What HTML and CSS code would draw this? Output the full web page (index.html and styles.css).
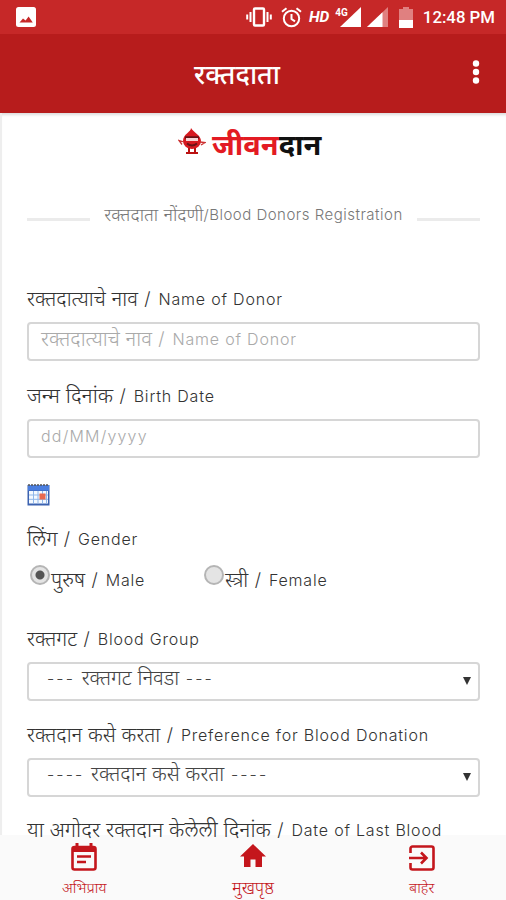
FILE: index.html
```html
<!DOCTYPE html>
<html lang="mr">
<head>
  <meta charset="UTF-8">
  <title>रक्तदाता</title>
  <meta name="viewport" content="width=device-width, initial-scale=1.0">
  <link rel="stylesheet" href="styles.css">
</head>
<body>
  <div class="statusbar">
    <svg class="picture" width="20" height="20" viewBox="0 0 20 20">
      <rect width="20" height="20" rx="2.5" fill="#fff"/>
      <path d="M3.5 15.500l3.500-4 2.600 2 3-4 4.200 6z" fill="#c62828"/>
    </svg>
    <div class="status-right">
      <svg width="26" height="20" viewBox="0 0 26 20" fill="none" stroke="#fff">
        <rect x="8" y="1.5" width="10" height="17" rx="1" stroke-width="2.4"/>
        <path d="M4.5 5v10M21.5 5v10" stroke-width="2"/>
        <path d="M1.2 7.5v5M24.8 7.5v5" stroke-width="2"/>
      </svg>
      <svg class="alarm" width="21" height="21" viewBox="0 0 21 21" fill="none" stroke="#fff" stroke-width="2">
        <circle cx="10.5" cy="11.5" r="7.7"/>
        <path d="M10.5 7v5l3.5 2.4M1 4.8l4.5-3.6M20 4.8l-4.5-3.6"/>
      </svg>
      <span class="hd">HD</span>
      <div class="signal">
        <span class="net">4G</span>
        <svg width="21" height="20" viewBox="0 0 21 20"><path d="M21 0v20H0z" fill="#fff"/></svg>
      </div>
      <svg class="signal2" width="21" height="20" viewBox="0 0 21 20">
        <path d="M21 0v20H0z" fill="#e08080"/>
        <path d="M15.5 5.2V20H0z" fill="#fff"/>
      </svg>
      <svg class="battery" width="14" height="21" viewBox="0 0 14 21">
        <path d="M4 0h6v2h4v11H0V2h4z" fill="#e08080"/>
        <path d="M0 13h14v8H0z" fill="#fff"/>
      </svg>
      <span class="time">12:48 PM</span>
    </div>
  </div>

  <header class="appbar">
    <h1>रक्तदाता</h1>
    <svg class="more" width="8" height="24" viewBox="0 0 8 24" fill="#fff">
      <circle cx="4" cy="3.5" r="3.2"/><circle cx="4" cy="12" r="3.2"/><circle cx="4" cy="20.5" r="3.2"/>
    </svg>
  </header>

  <main class="page">
    <div class="logo">
      <svg width="28" height="28" viewBox="0 0 28 28">
        <path d="M13 0c0 4-8 6-8 13a9 8 0 0 0 18 0C23 7 16 5 13 0z" fill="#d71920"/>
        <path d="M6 14l-5-1.500 3 4M22 14l5 .5-4 2.500" stroke="#c33" stroke-width="1.300" fill="none"/>
        <path d="M7 9.500h14" stroke="#6b1216" stroke-width="2.500"/>
        <path d="M8 11.500h12" stroke="#f6d5d5" stroke-width="3"/>
        <path d="M9 15.500q5 4 10 0" stroke="#6b1216" stroke-width="1.800" fill="none"/>
        <path d="M11 20v4M17 20v4M8 25h12" stroke="#b11" stroke-width="2"/>
      </svg>
      <span class="brand"><span class="red">जीवन</span>दान</span>
    </div>

    <div class="divider"><span><span class="hi">रक्तदाता नोंदणी</span><span class="en">/Blood Donors Registration</span></span></div>

    <form>
      <div class="field">
        <label><span class="hi">रक्तदात्याचे नाव</span><span class="slash"> / </span><span class="en">Name of Donor</span></label>
        <div class="box placeholder"><span class="hi">रक्तदात्याचे नाव</span><span class="slash"> / </span><span class="en">Name of Donor</span></div>
      </div>

      <div class="field">
        <label><span class="hi wide">जन्म दिनांक</span><span class="slash"> / </span><span class="en">Birth Date</span></label>
        <div class="box placeholder"><span class="en date">dd/MM/yyyy</span></div>
      </div>

      <svg class="calendar" width="23" height="22" viewBox="0 0 23 22">
        <rect x=".5" y="1" width="22" height="20.500" fill="#3c62b0"/>
        <rect x="1" y="1" width="21" height="5.500" fill="#4a7ee0"/>
        <path d="M1 1h21" stroke="#555" stroke-width="1.600" stroke-dasharray="2 1"/>
        <rect x="2" y="7" width="19" height="12.500" fill="#f4f9ff"/>
        <path d="M2 11h19M2 15.300h19M6.500 7v12.500M11 7v12.500M15.500 7v12.500M19.500 7v12.500" stroke="#8fb7ea"/>
        <rect x="12.500" y="9.500" width="6" height="6" fill="#e8694f"/>
      </svg>

      <div class="gender">
        <label><span class="hi wide">लिंग</span><span class="slash"> / </span><span class="en">Gender</span></label>
        <div class="options">
          <div class="option"><i class="radio checked"></i><span><span class="hi">पुरुष</span><span class="slash"> / </span><span class="en">Male</span></span></div>
          <div class="option"><i class="radio"></i><span><span class="hi">स्त्री</span><span class="slash"> / </span><span class="en">Female</span></span></div>
        </div>
      </div>

      <div class="field">
        <label><span class="hi">रक्तगट</span><span class="slash"> / </span><span class="en">Blood Group</span></label>
        <div class="box select"><span><span class="dash">--- </span><span class="hi">रक्तगट निवडा</span><span class="dash"> ---</span></span><i class="caret"></i></div>
      </div>

      <div class="field short">
        <label><span class="hi">रक्तदान कसे करता</span><span class="slash"> / </span><span class="en">Preference for Blood Donation</span></label>
        <div class="box select"><span><span class="dash">---- </span><span class="hi">रक्तदान कसे करता</span><span class="dash"> ----</span></span><i class="caret"></i></div>
      </div>

      <div class="field short">
        <label><span class="hi wide">या अगोदर रक्तदान केलेली दिनांक</span><span class="slash"> / </span><span class="en">Date of Last Blood</span></label>
      </div>
    </form>
  </main>

  <nav class="tabs">
    <a class="tab">
      <svg width="26" height="28" viewBox="0 0 26 28" fill="none" stroke="#c4161c">
        <rect x="1.500" y="4" width="23" height="22.500" rx="2" stroke-width="2.600"/>
        <path d="M1 6.500h24" stroke-width="5"/>
        <path d="M6 0v5M20 0v5" stroke-width="3"/>
        <path d="M6 13.500h14M6 19h9" stroke-width="2.500"/>
      </svg>
      <span>अभिप्राय</span>
    </a>
    <a class="tab active">
      <svg width="26" height="28" viewBox="0 0 26 28" fill="#c4161c">
        <path d="M13 1L0 13.500h4V24h6.500v-7.500h5V24H22V13.500h4z"/>
      </svg>
      <span>मुखपृष्ठ</span>
    </a>
    <a class="tab">
      <svg width="26" height="28" viewBox="0 0 26 28" fill="none" stroke="#c4161c" stroke-width="2.600">
        <path d="M1.500 10V5.500a2 2 0 0 1 2-2h19a2 2 0 0 1 2 2v19a2 2 0 0 1-2 2h-19a2 2 0 0 1-2-2V20"/>
        <path d="M0 15h17M12 9.500l5.500 5.500-5.500 5.500"/>
      </svg>
      <span>बाहेर</span>
    </a>
  </nav>
</body>
</html>
```
FILE: styles.css
```css
* {
  box-sizing: border-box;
}

body {
  margin: 0;
  width: 506px;
  height: 900px;
  overflow: hidden;
  display: flex;
  flex-direction: column;
  font-family: Inter, "Noto Sans", sans-serif;
  font-weight: 300;
  font-size: 16px;
  color: #333;
  background: #fff;
}

svg {
  display: block;
  flex: none;
}

.hi {
  font-size: 20.4px;
  line-height: 0;
  vertical-align: -1px;
}

.hi.wide {
  font-size: 21.1px;
}

.slash {
  font-size: 18px;
  line-height: 0;
  letter-spacing: 1.4px;
}

.en {
  letter-spacing: 0.8px;
}

.date {
  letter-spacing: 1.2px;
}

.dash {
  letter-spacing: 2.1px;
}

.statusbar {
  height: 34px;
  flex: none;
  display: flex;
  justify-content: space-between;
  padding: 0 11px 0 16px;
  align-items: center;
  background: #c62828;
  color: #fff;
}

.status-right {
  display: flex;
  align-items: center;
}

.alarm {
  margin-left: 9px;
}

.hd {
  margin-left: 7px;
  font: italic 700 15.5px Roboto, sans-serif;
}

.signal {
  display: flex;
  align-items: flex-start;
  margin-left: 6px;
}

.net {
  font: 700 10px Roboto, sans-serif;
  margin-right: -8px;
}

.signal2 {
  margin-left: 6px;
}

.battery {
  margin-left: 11px;
}

.time {
  margin-left: 10px;
  font: 500 16.8px Roboto, sans-serif;
}

.appbar {
  height: 79px;
  flex: none;
  display: flex;
  align-items: center;
  background: #b71c1c;
  padding: 0 26px 0 194px;
  justify-content: space-between;
  color: #fff;
}

.appbar h1 {
  margin: 0;
  font-size: 26.7px;
  font-weight: 500;
  white-space: nowrap;
}

.more {
  margin-bottom: 4px;
}

/* last label hangs a little over the tab bar */
.page {
  position: relative;
  z-index: 1;
  height: 722px;
  flex: none;
  padding: 0 26px 0 25px;
  border-left: 2px solid #eee;
  box-shadow: inset 0 4px 3px -2px #ddd;
}

.logo {
  display: flex;
  align-items: center;
  height: 60px;
  padding-left: 151px;
}

.logo svg {
  margin-top: -2px;
}

.brand {
  margin-left: 6px;
  font-size: 29px;
  font-weight: 700;
  color: #111;
  white-space: nowrap;
}

.brand .red {
  color: #e31b23;
}

.divider {
  display: flex;
  align-items: center;
  gap: 14px;
  height: 40px;
  margin-top: 21px;
  color: #777;
  font-size: 15px;
  white-space: nowrap;
}

.divider .hi {
  font-size: 18.2px;
}

.divider .en {
  letter-spacing: 0.5px;
}

.divider::before,
.divider::after {
  content: "";
  flex: 1;
  height: 3px;
  margin-top: 11px;
  background: #ebebeb;
}

form {
  padding-top: 52px;
}

.field {
  height: 97px;
}

.field.short {
  height: 96px;
  margin-top: -1px;
}

label {
  display: block;
  height: 36px;
  line-height: 26px;
  white-space: pre;
}

.box {
  height: 39px;
  border: 2px solid #d6d6d6;
  border-radius: 4px;
  padding: 0 12px;
  line-height: 30px;
  white-space: pre;
}

.placeholder {
  color: #aaa;
}

.select {
  display: flex;
  justify-content: space-between;
  padding: 0 7px 0 18px;
  line-height: 29px;
  color: #444;
}

.caret {
  margin-top: 13px;
  width: 0;
  height: 0;
  border: 4px solid transparent;
  border-top: 8px solid #333;
  border-bottom: 0;
}

.calendar {
  margin: 4px 0 20px;
}

.gender {
  height: 100px;
}

.options {
  display: flex;
  white-space: pre;
}

.option {
  width: 174px;
  display: flex;
  padding-left: 3px;
  line-height: 36px;
}

.radio {
  width: 20px;
  height: 20px;
  margin: 3px 1px 0 0;
  flex: none;
  border: 2px solid #b5b5b5;
  border-radius: 50%;
  background: #e4e4e4;
}

.radio.checked {
  background: radial-gradient(circle, #555 0 4px, #e4e4e4 5px);
}

.tabs {
  height: 65px;
  flex: none;
  display: flex;
  background: #fafafa;
  color: #c4161c;
}

.tab {
  flex: 1;
  display: flex;
  flex-direction: column;
  align-items: center;
  padding-top: 8px;
  font-size: 15px;
}

.tab.active {
  font-size: 17px;
}

.tab span {
  margin-top: 5px;
  line-height: 24px;
}
```
